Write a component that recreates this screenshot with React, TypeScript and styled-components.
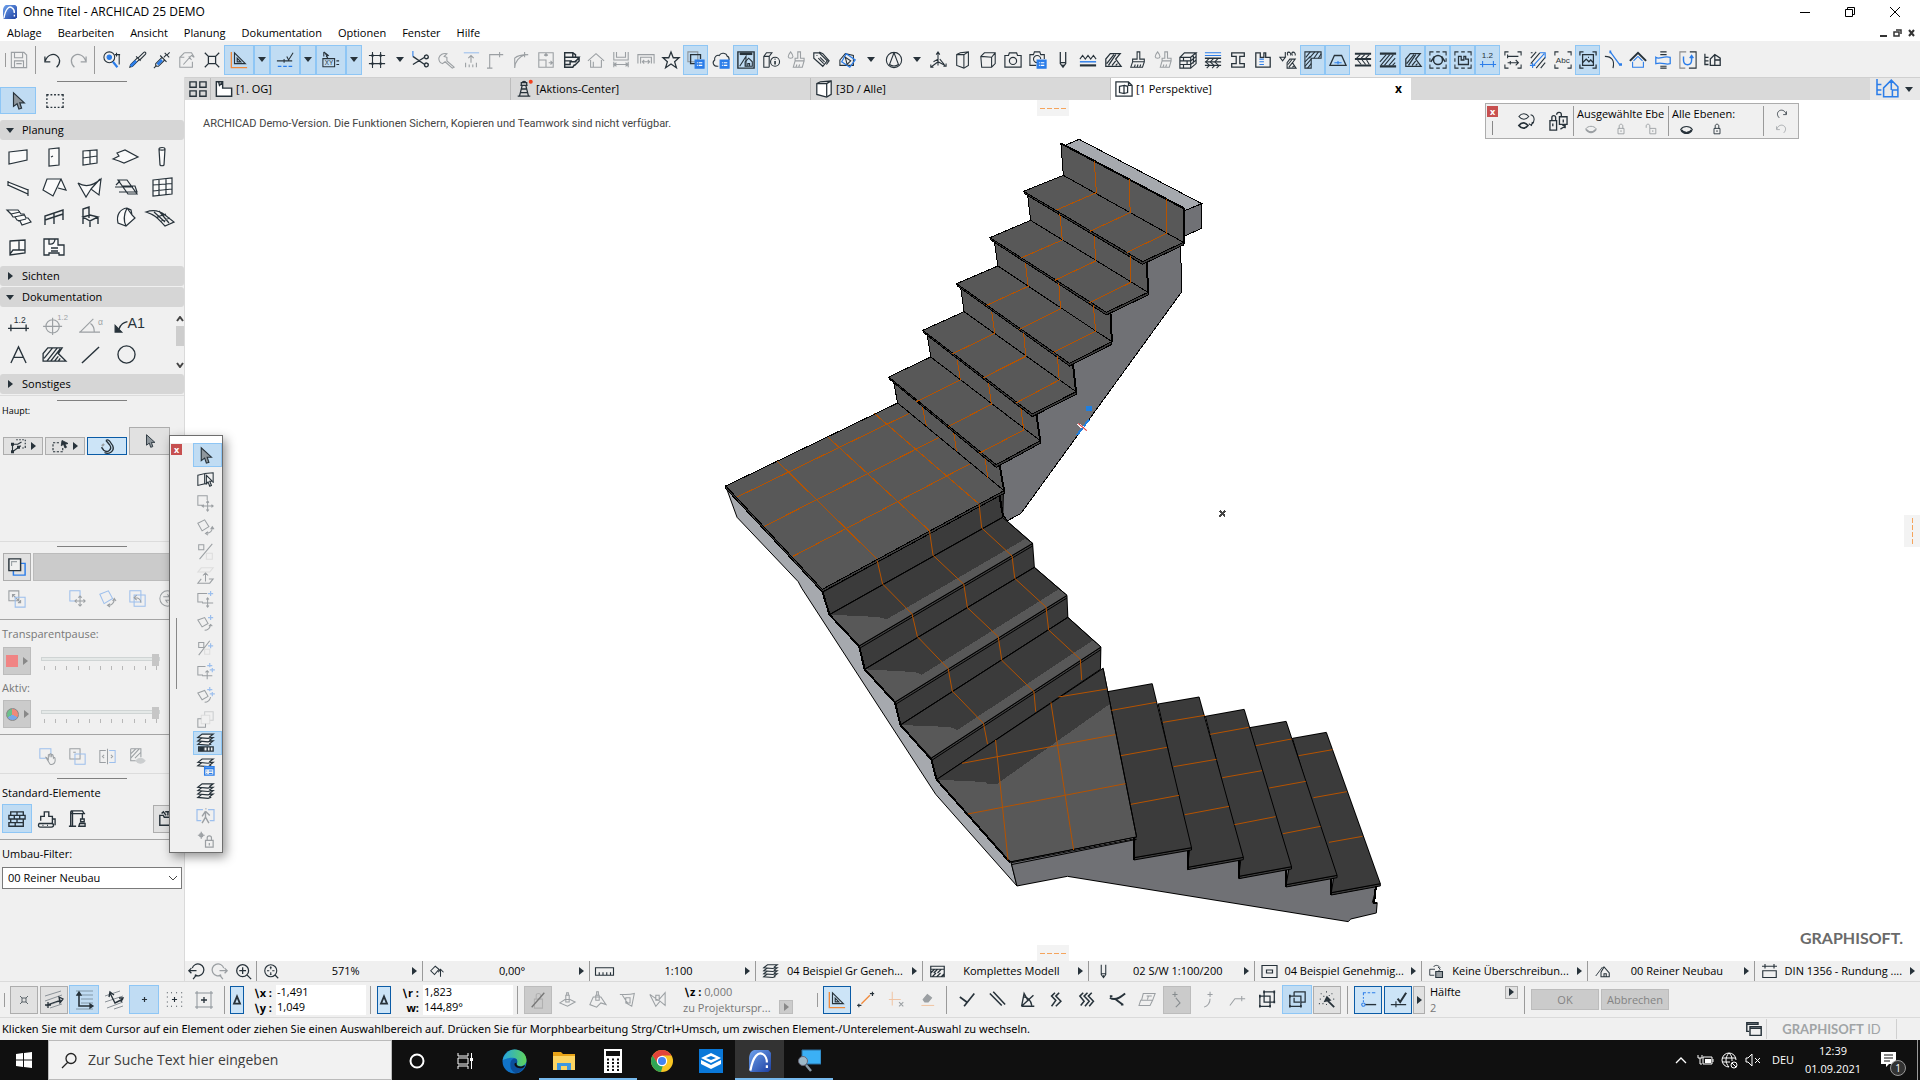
import React from "react";
import styled, { createGlobalStyle, css } from "styled-components";

const INK = "#27323a";
const BLUE = "#2b7de9";
const ORANGE = "#f08a3c";
const ACTIVE = "#c0dcf3";
const ACTIVE_EDGE = "#8ec6f5";
const PANEL = "#f0f0f0";
const UI_FONT = `"Open Sans", "Noto Sans", sans-serif`;

const Global = createGlobalStyle`
  *, *::before, *::after { box-sizing: border-box; }
  body { margin: 0; background: #fff; }
  button, input, select { font: inherit; color: inherit; margin: 0; padding: 0; border-radius: 0; }
  button { background: none; border: 0; display: inline-flex; align-items: center; justify-content: center; }
`;

/* ---------- icons: [path, stroke, fill, strokeWidth] on a 20 x 20 grid ---------- */

type Stroke = [string, string?, string?, number?];
type Glyph = { t: string; x: number; y: number; s: number; c?: string };
type Part = Stroke | Glyph;

const N = "none";
const G = "#9aa0a4";

const layer = (y: number): Stroke => [`M1 ${y + 4}L6 ${y}h13l-4 3 1 1-3 1z`, INK, PANEL, 1.4];

const icons: Record<string, Part[]> = {
  save: [["M1.5 1.5h14l3 3v14h-17zM5 1.500v6h9v-6M5 18v-7h10v7M7 14h6"]],
  undo: [["M1 6v6h6M1.500 11C4 4 10 2.500 14 5s5 8 0 13", INK, N, 1.4]],
  redo: [["M19 6v6h-6M18.500 11C16 4 10 2.500 6 5s-5 8 0 13", INK, N, 1.4]],
  find: [["M1 7a6 6 0 1 1 12 0a6 6 0 1 1-12 0", INK], ["M4.500 7a2.500 2.500 0 1 1 5 0a2.500 2.500 0 1 1-5 0", BLUE, BLUE], ["M11 12l5 6", BLUE, N, 2.4], ["M13 4h6M18 4v11M15 2v4"]],
  dropper: [["M9 6l5 5M11 8l6-6c2-2 4 0 2 2l-6 6"], ["M11 7l-8 8-1 3 3-1 8-8", INK], ["M3 17l6-6", BLUE, N, 3]],
  syringe: [["M8 5l7 7M12 7l3-3M13 2l5 5M15.500 4.500l3-3"], ["M10 7l-7 7v3h3l7-7M4 16l-3 3"], ["M5 15l5-5", BLUE, N, 3]],
  transferAll: [["M7 7H2v11h14v-6M2 7l5-5M7 2h8l3 5-3-2-9 10M12 6l3 4"]],
  stretch: [["M6 6h8v8H6zM2 2l4 4M18 2l-4 4M2 18l4-4M18 18l-4-4", INK, N, 1.4]],
  guide: [["M5 2v12h12zM8 8v4h4z", INK, N, 1.3], ["M1.500 1v17.500H19", ORANGE, N, 1.5]],
  snapPoint: [["M1 11h17M12 6l2 4 5-8M9 9v4"], ["M2 17h4M8 17h4M14 17h4", BLUE, N, 1.5]],
  tracker: [["M1 8.500h13v9H1zM16 11h3M16 15h3"], ["M2 1l5 4-2 1 1.500 2M2 1v5", INK, INK], { t: "XY", x: 3, y: 15.5, s: 7 }],
  grid: [["M5 1v18M14 1v18M1 5h18M1 14h18"], ["M4 5h2M13 5h2M4 14h2M13 14h2M5 4v2M14 4v2M5 13v2M14 13v2", INK, N, 2.500]],
  scissors: [["M1 6l13 9M1 15L14 7M14 15a2 2 0 1 1 4 1a2 2 0 1 1-4-1M14 7a2 2 0 1 0 4-1a2 2 0 1 0-4 1", INK, N, 1.5], ["M1 0v6", BLUE]],
  axe: [["M2 8c1-4 5-6 9-5L8 6l3 1v4l8 7-2 1-8-7-3 2C3 13 2 11 2 8z"]],
  adjust: [["M2 2h17", BLUE], ["M10 5v8M7 8l3-3 3 3M4 13v5M8 15v3M12 15v3M16 13v5"]],
  corner: [["M3 19V4h15M14 1v6M0 19h6"]],
  arcCorner: [["M3 19V8C6 5 10 4 18 4M3 19C3 12 8 6 15 4M14 1v6"]],
  resizeBox: [["M2 2h16v16H2zM2 10h8v8M10 6V3M8 5l2-2 2 2M13 13h4M15 11l2 2-2 2"]],
  beamCut: [["M3 2h9v5h7l-4 5H9v3H3zM3 15v3h9l2-3M12 2l3 2v3M3 7h9M3 11h8M14 12l5-4v3l-5 5", INK, N, 1.6]],
  roofHome: [["M1 11l9-8 9 8M4 10v8h12v-8M7 18v-6"]],
  dimBox: [["M2 1v9h16V1M5 1v6h10V1M2 15h16M2 12v6M18 12v6M5 13l-3 2 3 2M15 13l3 2-3 2"]],
  dimFlat: [["M1 14V4h18v10M4 14V7h12v7M7 12h6M8 10l-2 2 2 2M12 10l2 2-2 2"]],
  star: [["M10 1l2.500 6.500h6.500l-5 4.500 2 6.500-6-4-6 4 2-6.500-5-4.500h6.500z", INK, N, 1.4]],
  ghostOn: [["M1 1h11v11H1z", "#8b9298"], ["M9 14H4V4h11v5", INK, N, 1.5], ["M9 10h10v9H9z", BLUE, BLUE], ["M11 13h1M13 13h4M11 16h1M13 16h4", "#fff"]],
  cloudSet: [["M7 17H6c-5 0-6-5-3-7-1-4 3-6 5-5 2-4 8-3 9 1 2 0 2 3 2 4"], ["M9 10h10v9H9z", BLUE, BLUE], ["M11 13h1M13 13h4M11 16h1M13 16h4", "#fff"]],
  houseBlue: [["M1 1h18v18H1z", INK, N, 1.6], ["M3 3h14", INK, N, 3], ["M3 17L10 6v11"], ["M9 12l4-4 4 4v5H9zM12 17v-3h2v3"]],
  bookInfo: [["M8 18H2V6l3-4h6L8 6v12M2 6h6M19.500 12a5 5 0 1 1-10 0a5 5 0 1 1 10 0"], ["M14.500 11v4M14.500 8.500v1", INK, N, 1.8]],
  brush: [["M9 1h3v8h5v3H4V9h5zM4 12l-2 6h13l2-6M6 18l1-3M9 18l1-3M12 18l1-3"]],
  dropBrush: [["M12 1h3v7h4v3H9V8h3zM9 11l-2 7h10l2-7M10 18l1-3M13 18l1-3M4 1c4 5 3 7 0 7s-4-2 0-7z"]],
  tags: [["M2 2h6l9 9-5 6-10-9zM8 1l4 2 7 8-3 4M5 5h1", INK, N, 1.3], ["M7 8l6 6M9 7l5 5"]],
  cubeEdit: [["M1 10l6-7 9 2v11H1z"], ["M8 3l10 7-6 8-9-6z", BLUE, N, 1.4], ["M7 7l6 4-4 4z"]],
  compass: [["M1.500 10a8.500 8.500 0 1 1 17 0a8.500 8.500 0 1 1-17 0M10 2L5 15c3 2 7 2 10 0z"]],
  origin: [["M10 12V2M8 4l2-3 2 3M10 12l-8 6M2 15v3h3M10 12l8 4M16 17h3v-3M5 12l5-3v7M12 9l5 6"]],
  box3d: [["M3 4l4-2 9-1v15l-5 3-8-3zM11 4v14M3 4l8 0 5-3"]],
  cube: [["M2 6l4-4h12v12l-4 4H3zM2 6l12 1 4-5M14 7v11"]],
  camera: [["M1 5h4l1-3h8l1 3h4v13H1zM6 11a4 4 0 1 1 8 0a4 4 0 1 1-8 0", INK, N, 1.3]],
  cameraSet: [["M8 16H1V4h4l1-3h6l1 3h4v5M5 9a4 4 0 1 1 8 0M5 9a4 4 0 0 0 4 4"], ["M9 10h10v9H9z", BLUE, BLUE], ["M11 13h1M13 13h4M11 16h1M13 16h4", "#fff"]],
  pen: [["M7 1v13l3 4 3-4V1M7 13h6M10 15v3", INK, N, 1.4]],
  lineTypes: [["M1 9l3-4 3 4 3-4 3 4 3-4 3 4"], ["M1 12h18", BLUE, N, 1.6], ["M1 16h18", INK, N, 2.4]],
  hatch: [["M2 17V9l5-6h11l-5 6 6 8zM3 14l8-10M5 16l8-12M9 16l4-5M13 16l2-2", INK, N, 1.4]],
  brick: [["M1 7h12v12H1zM1 7l5-5h13l-6 5M19 2v12l-6 5M1 11h12l6-5M1 15h12l6-5M5 7v4M9 11v4M5 15v4M16 4v4M16 9v5", INK, N, 1.3]],
  composite: [["M1 2h18M1 5h18", BLUE], ["M1 8h18M1 12h18M1 16h18", INK, N, 1.5], ["M2 12l4-4M7 12l4-4M12 12l4-4M2 12l4 4M7 12l4 4M12 12l4 4M3 19l3-3M9 19l3-3M14 19l3-3"]],
  profile: [["M3 2h14v4h-5v8h5v4H3v-4h5V6H3z", INK, N, 1.4]],
  zone: [["M2 2h5v5h4V2h2v5h5v11H2z", INK, N, 1.4], ["M6 9h5M6 12h5M6 15h5", BLUE]],
  surfaces: [["M1 7h6L4 11zM7 7V1M10 5c-3-5 4-5 3 0M15 5c-3-5 4-5 3 0M9 19v-6l3-4h6l-3 4 4 6zM10 15l4-5M11 18l4-5M15 18l2-2"]],
  wallHatch: [["M1 1h18v7H8v11H1z", INK], ["M2 7l5-6M6 8l6-7M11 8l5-7M16 8l3-5M1 12l6-6M1 17l7-8M4 19l4-5", INK]],
  trapezoid: [["M6 5h8l5 11H1z", INK, N, 1.4], ["M6 13h8M10 11v4", BLUE]],
  layersTwo: [["M1 3h18M1 9h18M1 16h18", INK, N, 2.2], ["M3 8l4-4M8 8l4-4M13 8l4-4M4 10l4 5M9 10l4 5M14 10l3 5"]],
  bandHatch: [["M1 3h18M1 17h18", INK, N, 2.6], ["M2 16L12 4M6 16L16 4M11 16l7-8M1 12l7-8M15 16l3-3"]],
  circleBox: [["M1 5V1h4M8 1h4M15 1h4v4M19 8v4M19 15v4h-4M12 19H8M5 19H1v-4M1 12V8"], ["M5 10a5 5 0 1 1 10 0a5 5 0 1 1-10 0M2 12l4-6M18 12l-4-6", INK, N, 1.6]],
  zoneBox: [["M1 5V1h4M8 1h4M15 1h4v4M19 8v4M19 15v4h-4M12 19H8M5 19H1v-4M1 12V8"], ["M5 15V6h3v4h3V6h2v3h3v6z", INK, N, 1.4]],
  dimBlue: [["M1 15h18M4 11v7M16 11v7", BLUE], { t: "1.2", x: 3, y: 8, s: 9 }],
  dimFrame: [["M1 5V1h4M15 1h4v4M19 15v4h-4M5 19H1v-4M4 6h12M4 4v4M4 13h12M13 10l3 3-3 3M7 11v4"]],
  hatchFrame: [["M2 8l6-7M2 14L12 2M8 19l10-12M13 19l5-6M4 2h-2", INK], ["M4 17L17 3M12 2h6v6M1 16h6M4 13v6", BLUE]],
  abcFrame: [["M1 5V1h4M15 1h4v4M19 15v4h-4M5 19H1v-4"], { t: "Abc", x: 2, y: 13.5, s: 9 }],
  imgFrame: [["M1 5V1h4M15 1h4v4M19 15v4h-4M5 19H1v-4M4 4h12v12H4zM4 13l4-4 3 3 2-2 3 3M10 7h1", INK, N, 1.4]],
  tangent: [["M1 6c8 0 11 5 9 13"], ["M7 1l11 15", BLUE, N, 1.4], ["M6 1h2M17 15h3", BLUE, N, 3]],
  roofBlue: [["M1 11l9-9 9 9", INK, N, 2.2], ["M4 12v6h12v-6M10 6l-5 5M10 6l5 5", BLUE]],
  section: [["M2 7c4 3 8-2 16 0v7c-5 2-8-2-16 0z", BLUE, N, 1.4], ["M7 1h7M7 4h7M7 17h7M7 19h7"]],
  magnetBlocks: [["M8 1H1v18h6", "#888"], ["M12 1h7v18h-8"], ["M5 6v4c0 7 9 7 9 0V6M12 8l2-3 2 3", BLUE, N, 1.6]],
  treeHouse: [["M1 3v12h4M1 7h4M1 11h4M7 16V9l5-5 6 4v8zM12 4v12M12 10h6", INK, N, 1.4]],
  treeHouseBlue: [["M0 1v14h4M0 6h4M0 11h4M6 17V9l7-7 6 6v9zM14 17v-6h5M13 2v9", BLUE, N, 1.4]],
  four: [["M1 2h7v6H1zM12 2h7v6h-7zM1 12h7v6H1zM12 12h7v6h-7z", INK, N, 1.5]],
  plan: [["M1.500 2h7v7h10v9H1.500zM4 2l1 4 3-3", INK, "#fff", 1.6]],
  tower: [["M6 6h8M7 6V3h6v3M8 3c0-2 4-2 4 0M8 6L5 18M12 6l3 12M3 18h14M7 10h6M6 14h8", INK, N, 1.4], ["M16 2a1.500 1.500 0 1 0 3 0a1.500 1.500 0 1 0-3 0", "#f1401e", "#f1401e", 1.5]],
  box3dWhite: [["M2 4l4-2 12-1v15l-5 3-11-3zM13 4v14M2 4h11l5-3", INK, "#fff", 1.4]],
  perspective: [["M1 2h14l4 4v12H1zM15 2v4h4M5 7l5-1v9l-5-1zM10 6l4 1v7l-4 1", INK, N, 1.4]],
  cursor: [["M5 1v15l4-3 2 6 3-1-2-6h5z", INK, "#8f979d", 1.3]],
  marquee: [["M1 5V3h2M5 3h2M9 3h2M13 3h2M17 3h2v2M19 7v2M19 11v2M19 15v2h-2M15 17h-2M11 17H9M7 17H5M3 17H1v-2M1 13v-2M1 9V7", INK, N, 1.5]],
  wall: [["M1 5l18-2v10L1 17z", INK, "#fafafa", 1.2]],
  door: [["M5 2l10-1v17L5 19zM7 10l2-1", INK, "#fafafa", 1.2]],
  window: [["M3 4l14-1v13L3 18zM10 3.500v13.500M3 11l14-2", INK, "#fafafa", 1.2]],
  slab: [["M-3 12l6-3-2-3 8-3 13 7-14 6-5-2z", INK, "#fafafa", 1.2]],
  column: [["M7 2c0-2 6-2 6 0l-1 16c-1 1-3 1-4 0zM7 2c0 1.500 6 1.500 6 0", INK, "#fafafa", 1.2]],
  beam: [["M0 5l20 8v4L0 8zM0 4v5M20 12v7", INK, "#fafafa", 1.2]],
  roof: [["M3 2h14l-8 17-10-6zM17 2l5 11-8-2", INK, "#fafafa", 1.2]],
  shell: [["M-2 6c8 5 16 2 23-4l-2 16-8-6-5 8zM11 12l9-10", INK, "#fafafa", 1.2]],
  skylight: [["M2 3h9l10 14h-9zM-1 10h18M3 15h18l-2-6H6M0 8l4-4", INK, N, 1.2]],
  curtain: [["M1 3l19-2v16L1 19zM7 2.500v16M14 2v15.500M1 8l19-1.500M1 14l19-2", INK, "#fafafa", 1.2]],
  stair: [["M-1 3h11l3 4h3l2 4h2l3 4-9 3-2-4-3-1-2-3H5L3 7zM3 7l9-2M6 10l10-2M10 14l8-2", INK, "#fafafa", 1.2]],
  railing: [["M1 18V9l18-6v10M1 13l18-6M10 6v11", INK, N, 1.4]],
  chair: [["M3 10V2l6-2v11M3 10l7-2 8 2-8 4zM3 10v7M10 14v6M18 10v7", INK, N, 1.4]],
  morph: [["M2 16c-2-8 2-14 9-15l4 2 1 5 3 3-9 8zM11 1c-3 6-4 12-1 18M11 1l5 7", INK, "#fafafa", 1.2]],
  mesh: [["M-6 5c8-3 14-1 19 3l9 7-9 4C7 13 4 8-6 5zM2 5l11 10M7 4l10 12M5 10l9-3M9 14l9-3", INK, N, 1.2]],
  corner2: [["M2 4l15-1v13L2 18zM11 3.500v10M2 17l3-4 12 0", INK, "#fafafa", 1.3]],
  zoneTool: [["M0 2h5v5c4 1 6-2 6-5h3v6h6v10h-5v-2H5v2H0zM7 11h7M7 14h7M5 2h6", INK, "#fafafa", 1.3]],
  dim: [["M-1 14h22M2 10v7M18 10v7", INK, N, 1.4], { t: "1.2", x: 5, y: 8, s: 9 }],
  levelDim: [["M1 12a7 7 0 1 1 14 0a7 7 0 1 1-14 0M-2 12h20M8 3v18"], { t: "1.2", x: 13, y: 5, s: 8 }],
  angleDim: [["M-2 18h22M-1 18L13 4M10 9c3 2 4 6 4 9"], { t: "α", x: 18, y: 10, s: 9 }],
  label: [["M2 15c2-6 5-7 9-8", INK, N, 1.4], ["M-2 11v7h7z", INK, INK], { t: "A1", x: 11, y: 14, s: 15 }],
  text: [["M2 19L10 2l8 17M5 13h10", INK, N, 1.4]],
  fill: [["M-2 17V9l5-6h15l-4 6 8 8zM-1 14L8 3M2 17L13 3M6 17L16 4M10 17l4-5M14 17l2-3", INK, N, 1.4]],
  line: [["M1 19L19 2", INK, N, 1.5]],
  circle: [["M1 10a9 9 0 1 1 18 0a9 9 0 1 1-18 0", INK, N, 1.4]],
  quickSelect: [["M7 1h2M11 1h2M15 1h2M19 1v2M19 5v2M19 9v3M15 12h2M1 7h8l5-3M2 17l11-8M2 7v10", INK, N, 1.5], ["M0 17h4M8 11h4M0 7h4", INK, N, 4]],
  marqueeCur: [["M0 5h3M5 5h3M0 17h3M5 17h3M10 17h3M0 7v3M0 12v3M13 12v3", INK, N, 1.5], ["M12 2l8 4-4 1 2 4-2 1-2-5-3 2z", INK, INK]],
  magnet: [["M8 2l5 6c4 6-3 11-8 7L2 11M13 3l4 6c3 8-6 12-11 9M8 2c2-2 4 0 5 1", INK, N, 1.8], ["M3 7l2 2", G, N, 4]],
  ghostWin: [["M6 6h13v13H6z", BLUE, N, 1.6], ["M1 1h13v13H1z", INK, PANEL, 1.6], ["M4 9V4h6", G]],
  compare: [["M1 1h11v11H1zM5 5l9 9M5 8V5h3M14 11v3h-3"], ["M8 8h11v11H8z", BLUE]],
  moveG: [["M8 13H1V1h12v8", BLUE], ["M7 13h12M13 7v12M11 9l2-2 2 2M11 17l2 2 2-2M9 11l-2 2 2 2M17 11l2 2-2 2"]],
  rotG: [["M1 5l10-4 5 9-10 6z", BLUE], ["M11 18c4 0 7-3 7-7M16 13l2-3 2 3M13 16l-3 2 3 2"]],
  backG: [["M1 1h13v13H1zM6 6h13v13H6z", BLUE], ["M7 9c4 0 7 1 7 6M9 6L6 9l3 3"]],
  swapG: [["M1 10a9 9 0 1 1 18 0a9 9 0 1 1-18 0M5 8h7l-2-3M15 12H8l2 3"]],
  handG: [["M8 12H1V1h13v6", BLUE], ["M8 11c2 0 2 3 3 3V8c1-1 2 0 2 3V7c1-1 2 0 2 4V8c1-1 2 0 2 4 2-2 2 0 2 3s-3 5-6 4z"]],
  overlapG: [["M1 1h12v12H1zM5 5h3"], ["M7 7h12v12H7z", BLUE]],
  splitG: [["M8 3H1v14h7M10 1v18M6 8l-2 2 2 2M14 8l2 2-2 2"], ["M12 3h7v14h-7", BLUE]],
  hatchEye: [["M2 1h12v10M2 1v14h6M2 12L12 1M2 7l6-6M7 12l7-7"], ["M8 15c3-4 8-4 11 0-3 4-8 4-11 0z", G, G]],
  bricks: [["M3 2h14v4H3zM1 6h12v4H1zM3 10h14v4H3zM1 14h16v4H1zM10 2v4M7 6v4M13 6h6v4h-6M10 10v4M8 14v4", INK, N, 1.5]],
  dozer: [["M1 15h14c3 0 3 4 0 4H2c-2 0-2-4 0-4zM3 12V7h4V2h5v5h4v8M16 10h3v7M5 17h1M10 17h1", INK, N, 1.5]],
  crane: [["M3 18V2h2v16M1 18h8M3 4h16M3 1h13l2 3M16 4v6M14 10h4v3h-4zM12 18h7v-3h-6z", INK, N, 1.5]],
  stack: [["M2 17V6h4l1 2h11v9zM4 4l2-2 3 4M8 2h6v4M11 1v5", INK, N, 1.6]],
  wallCur: [["M1 5l8-2v12l-8 2zM9 3l10-1v12M9 15l3 0"], ["M11 5v10l2-2 2 5 2-1-2-5h3z", INK, PANEL, 1.3]],
  moveP: [["M7 12H1V1h11v5M6 13h13M12.500 7v12M11 9l1.500-2L14 9M11 17l1.500 2 1.500-2M8 11.500L6 13l2 1.500M17 11.500l2 1.500-2 1.500"]],
  rotP: [["M1 5l8-4 5 8-8 5zM10 17c5 0 8-2 8-7M16 12l2-3 2 3M13 15l-3 2 3 2"]],
  mirrorP: [["M2 2h6v6H2zM18 1L3 19"], ["M11 12h7v7h-7z", "#c4c4c4"]],
  elevP: [["M5 1h14l-4 5H1z", "#c4c4c4"], ["M5 14L1 19h14l4-5h-5M10 17V7M7 10l3-3 3 3"]],
  moveC: [["M7 13H1V3h11M6 14h13M12.500 8v11M11 10l1.500-2L14 10M11 17l1.500 2 1.500-2"], ["M16 0v6M13 3h6", BLUE, N, 1.4]],
  rotC: [["M1 6l8-3 4 7-7 4zM9 18c4 0 6-2 7-6M14 13l2-2 2 2"], ["M16 0v6M13 3h6", BLUE, N, 1.4]],
  mirrorC: [["M2 4h6v6H2zM15 2L2 19"], ["M9 12h6v6H9z", "#c4c4c4"], ["M16 5v6M13 8h6", BLUE, N, 1.4]],
  moveCC: [["M7 14H1V4h9M6 15h12M12 9v10M10 11l2-2 2 2"], ["M15 0v5M12 3h6M18 6v5M15 8h6", BLUE, N, 1.4]],
  rotCC: [["M1 7l8-3 4 7-7 4zM9 18c4 0 6-2 7-6"], ["M15 0v5M12 3h6M18 6v5M15 8h6", BLUE, N, 1.4]],
  copies: [["M9 1h10v10H9z", G, PANEL], ["M5 5h10v10H5z", "#c4c4c4", PANEL], ["M5 9H1v10h9v-4"]],
  layersSet: [layer(7), layer(3), layer(-1), ["M2 14h17v5H2zM8 14v5M12 14v5M15.500 14v5", INK, PANEL, 1.6], ["M5 14v5", INK, N, 5]],
  layersDlg: [layer(4), layer(0), ["M9 9h11v10H9z", BLUE, PANEL, 1.6], ["M9 11h11", BLUE, N, 2.4], ["M11 14h1M14 14h4M11 17h1M14 17h4", BLUE]],
  layers: [layer(13), layer(9), layer(5), layer(1)],
  walk: [["M7 3H0v13h5M13 3h7v13h-5", BLUE, N, 1.4], ["M10 2h1M10 5l-4 6M10 5l5 5M10 5v7l-4 7M10 12l4 7", INK, N, 1.6]],
  lockSnap: [["M5 1v8M1 5h8M3 5a2 2 0 1 1 4 0a2 2 0 1 1-4 0M10 11h9v8h-9zM12 11V8c0-3 5-3 5 0v3M14.500 14v3", INK, N, 1.4]],
  zoomPrev: [["M6 19l4-5M5 6a7 7 0 1 1 3 8M1 9h9M4 6L1 9l3 3", INK, N, 1.5]],
  zoomNext: [["M14 19l-4-5M15 6a7 7 0 1 0-3 8M19 9h-9M16 6l3 3-3 3", INK, N, 1.5]],
  zoomIn: [["M2 9a7 7 0 1 1 14 0a7 7 0 1 1-14 0M14 14l5 5M9 5v8M5 9h8", INK, N, 1.5]],
  zoomFit: [["M1 9a8 8 0 1 1 16 0a8 8 0 1 1-16 0M15 15l4 4M9 4v3M9 11v3M4 9h3M11 9h3M8 5l1-1 1 1M8 13l1 1 1-1", INK, N, 1.5]],
  orient: [["M1 9l6-6 5 4-6 7zM14 17V8M11 11l3-4 4 4", INK, N, 1.4]],
  ruler: [["M-2 5h24v10H-2zM3 11v4M8 11v4M13 11v4M18 11v4", INK, N, 1.5]],
  hatchBox: [["M1 3h18v14H1zM1 7h18M1 12l5-5M5 12l5-5M10 12l5-5M3 17l5-5M9 17l5-5M15 17l4-4", INK, N, 1.6]],
  frameBox: [["M0 2h20v16H0zM6 8h8v4H6z", INK, N, 1.6]],
  override: [["M8 7H1v8h6M12 4l3 3-3 3M6 4c2-3 6-3 9 1"], ["M9 10h9v8H9z", INK, "#9aa0a4", 1.4]],
  houseOut: [["M1 16L10 4"], ["M8 17v-6l4-7 7 8v5zM12 17v-4h3v4", INK, N, 1.4]],
  dimStd: [["M0 3h20M4 0v6M16 0v6M1 9h18v9H1z", INK, N, 1.5]],
  gridSkew: [["M1 6l16-5M1 11l17-6M2 16l17-6M6 18l12-4", "#8b9298", N, 1], ["M3 15l14-5M15 7l4 2-3 4zM1 15h6M4 12v6", INK, N, 1.3]],
  gridAxes: [["M2 1h17M2 5h17M7 9h12M7 13h12M2 19h17", "#8298a8", N, 1], ["M5 3v13h13", INK, N, 1.6], ["M3 5l2-3 2 3zM16 14l3 2-3 2z", INK, INK, 1.3]],
  gridRot: [["M1 6l15-5M1 12l18-6M3 18l16-6M10 19l9-3", "#8b9298", N, 1], ["M6 3l5 10 8-4M5 7l1-5 4 3M15 8h4l-2 4", INK, N, 1.4]],
  cross: [["M10 7v6M7 10h6", INK, N, 1.4]],
  dotsCross: [["M10 7v6M7 10h6", INK, N, 1.3], ["M1 2h1M6 2h1M12 2h1M18 2h1M1 7h1M18 7h1M1 13h1M18 13h1M1 18h1M6 18h1M12 18h1M18 18h1", INK]],
  dotsFrame: [["M10 7v6M7 10h6", INK, N, 1.3], ["M3 1v18M17 1v18M1 3h18M1 17h18", "#8b9298", N, 1]],
  delta: [["M10 4l5 12H5z", INK, N, 3]],
  lockOff: [["M6 9h9v10H6zM8 9V5c0-3 5-3 5 0v4", "#b0b0b0"], ["M17 2L3 18", "#777", N, 1.5]],
  planeA: [["M1 14l6-4h6l6 3-9 5zM8 5h4v8H8zM9 5V2h2v3"]],
  planeB: [["M1 16l4-9h9l6 9-6-2-5 5zM8 5h4v6H8zM9 5V1h2v4"]],
  planeC: [["M1 4c6 0 10 1 17-1l-3 15-7-4M4 5l6 9M8 8h5v6H8z"]],
  planeD: [["M1 4l7 14 5-6 6 5V2l-8 9zM8 5h4v6H8z"]],
  guideSeg: [["M1 15v4M-1 17h5M17 1v5M14 3h5", INK, N, 1.4], ["M4 15L14 5", ORANGE, N, 1.6]],
  guideX: [["M5 1v16M1 10h14", ORANGE], ["M13 13l5 5M18 13l-5 5"]],
  eraser: [["M6 10l5-6 5 4-4 5H8z", INK, INK], ["M4 17h15", ORANGE]],
  perp: [["M1 7l8 6M18 3L6 18", INK, N, 2]],
  parallel: [["M1 3l14 14M5 1l14 15", INK, N, 1.8]],
  bisect: [["M3 18L6 3l5 9M3 18h15M3 18L17 5M6 7c4 0 8 4 9 10", INK, N, 1.6]],
  offset1: [["M7 2l-4 4 5 5-5 7M12 2L8 6l6 6-6 6", INK, N, 1.8]],
  offset2: [["M5 2L1 6l5 6-4 5M10 2L6 6l6 6-5 6M15 2l-4 4 6 6-5 6", INK, N, 1.8]],
  special: [["M1 8c6 4 12 0 18-5M8 10l8 6M1 6h3M14 16h3", INK, N, 2.2]],
  planeT: [["M2 11h14l-3 6H0zM5 3h14l-3 8H3zM9 6h6M11 6l-1 4"]],
  seg1: [["M7 1v6M4 4h6M8 8l5 6-5 5"]],
  arc1: [["M13 1v6M10 4h6M13 9c0 5-2 8-7 10"]],
  arc2: [["M1 17l6-8h5M15 6v6M12 9h7"]],
  groupA: [["M6 1h12v12H6zM1 6h12v12H1z", INK, N, 1.5], ["M5 1h2M17 1h2M17 13h2M0 6h2M0 18h2M12 18h2", INK, N, 3]],
  groupB: [["M6 1h13v12h-5M1 6h13v12H1zM6 6V1M6 8v5h7", INK, N, 1.5], ["M0 6h2M0 18h2M13 18h2", INK, N, 3]],
  wand: [["M9 9l9 9M8 11l2-4 3 3z", INK, N, 2], ["M3 3h1M9 1h1M15 3h1M2 9h1M5 14h1M17 9h1M6 6h1M12 5h1M1 14h1M9 15h1", INK]],
  snapGuide: [["M4 13v-2M4 9V7M4 5V2h3M9 2h3M14 2h4", BLUE], ["M6 16h13", INK, N, 1.6], ["M2 16a2 2 0 1 1 4 0a2 2 0 1 1-4 0", BLUE]],
  snapCheck: [["M1 16h18M7 12v7", INK, N, 1.3], ["M9 9l3 4 7-11", INK, N, 2.4]],
  windows: [["M4 13H1V2h14v3M1 4h14", INK, N, 1.8], ["M5 7h14v11H5zM5 9h14", INK, N, 1.8]],
  eyeSwap: [["M1 5c3-4 8-4 11 0-3 4-8 4-11 0zM14 3c5 1 5 8 1 11M12 13l3 2 1-4"], ["M1 15c3-4 7-4 10 0-3 4-7 4-10 0z", INK, N, 2]],
  lockSwap: [["M1 9h7v10H1zM3 9V6c0-3 4-3 4 0v3M11 5h8v8h-8zM13 5V3c0-4-5-3-5 0M12 18l5-3M14 14h3v3M4 12v3M15 8v3", INK, N, 1.4]],
  eye: [["M1 10c4-6 14-6 18 0-4 6-14 6-18 0z", INK, N, 1.6], ["M2 11c4 6 12 6 16 0", INK, N, 3]],
  lock: [["M5 9h10v9H5zM7 9V5c0-4 6-4 6 0v4M10 12v3", INK, N, 1.5]],
  unlock: [["M8 9h10v9H8zM8 9V5c0-4-6-4-6 0v3M13 12v3", INK, N, 1.5]],
};

const Svg = styled.svg<{ $size: number; $dim?: boolean }>`
  width: ${p => p.$size}px;
  height: ${p => p.$size}px;
  flex: none;
  overflow: visible;
  opacity: ${p => (p.$dim ? 0.42 : 1)};
`;

function Icon({ name, size = 18, dim }: { name: string; size?: number; dim?: boolean }) {
  return (
    <Svg $size={size} $dim={dim} viewBox="0 0 20 20" aria-hidden="true">
      {(icons[name] || []).map((p, i) =>
        Array.isArray(p) ? (
          <path key={i} d={p[0]} stroke={p[1] || INK} fill={p[2] || "none"} strokeWidth={p[3] || 1.2} />
        ) : (
          <text key={i} x={p.x} y={p.y} fontSize={p.s} fill={p.c || INK} fontFamily="Liberation Sans, sans-serif">
            {p.t}
          </text>
        )
      )}
    </Svg>
  );
}

const Tri = styled.span<{ $dir: "down" | "right"; $dim?: boolean }>`
  flex: none;
  width: 0;
  height: 0;
  border: 4px solid transparent;
  ${p =>
    p.$dir === "down"
      ? css`border-top: 5px solid ${p.$dim ? "#888" : INK}; border-bottom: 0;`
      : css`border-left: 5px solid ${p.$dim ? "#888" : INK}; border-right: 0;`}
`;

/* ---------- shared shells ---------- */

const Shell = styled.div`
  height: 100vh;
  display: flex;
  flex-direction: column;
  overflow: hidden;
  background: #fff;
  color: #000;
  font: 11px/16px ${UI_FONT};
`;

const TitleBar = styled.header`
  flex: none;
  height: 24px;
  display: flex;
  align-items: center;
  padding: 0 3px;
`;
const Title = styled.h1`
  margin: 0 0 0 6px;
  flex: 1;
  font: 12px/16px ${UI_FONT};
`;
const WinButton = styled.button`
  width: 45px;
  height: 20px;
`;
const MenuBar = styled.nav`
  flex: none;
  height: 17px;
  display: flex;
  align-items: center;
  gap: 16px;
  padding: 0 4px 0 7px;
`;
const MenuItem = styled.button`
  font-size: 11px;
  line-height: 16px;
`;
const MdiButtons = styled.div`
  margin-left: auto;
  display: flex;
  gap: 5px;
`;
const TopBar = styled.div`
  flex: none;
  height: 36px;
  display: flex;
  align-items: center;
  background: ${PANEL};
  padding: 1px 0 0 5px;
`;
const ToolButton = styled.button<{ $on?: boolean; $w?: number }>`
  flex: none;
  width: ${p => p.$w || 25}px;
  height: 30px;
  border: 1px solid ${p => (p.$on ? ACTIVE_EDGE : "transparent")};
  background: ${p => (p.$on ? ACTIVE : "transparent")};
`;
const Divider = styled.span<{ $h?: number; $m?: number }>`
  flex: none;
  width: 1px;
  height: ${p => p.$h || 28}px;
  margin: 0 ${p => p.$m ?? 4}px;
  background: #9a9a9a;
`;

const Workspace = styled.div`
  flex: 1;
  min-height: 0;
  display: flex;
  position: relative;
`;

/* ---------- sidebar ---------- */

const Sidebar = styled.aside`
  flex: none;
  width: 185px;
  background: ${PANEL};
  border-right: 1px solid #dadada;
  overflow: hidden;
`;
const Block = styled.section<{ $h: number; $first?: boolean }>`
  height: ${p => p.$h}px;
  border-top: ${p => (p.$first ? 0 : "1px solid #dcdcdc")};
  display: flex;
  flex-direction: column;
`;
const Grip = styled.div`
  flex: none;
  width: 70px;
  height: 1px;
  margin: 4px auto;
  background: #808080;
`;
const PanelHead = styled.button`
  flex: none;
  width: 100%;
  height: 20px;
  justify-content: flex-start;
  gap: 8px;
  padding-left: 6px;
  margin-bottom: 1px;
  border-radius: 3px;
  background: #d6d6d6;
  font-size: 11px;
`;
const HeadMark = styled.span`
  width: 8px;
  display: flex;
  justify-content: center;
`;
const ToolGrid = styled.div<{ $bottom: number }>`
  display: grid;
  grid-template-columns: repeat(5, 36px);
  grid-auto-rows: 30px;
  padding: 1px 0 ${p => p.$bottom}px;
`;
const Cell = styled.button`
  width: 36px;
  height: 30px;
`;
const DocArea = styled.div`
  display: flex;
  position: relative;
`;
const ScrollRail = styled.div`
  position: absolute;
  right: 0;
  top: 8px;
  width: 8px;
  height: 52px;
  display: flex;
  flex-direction: column;
  align-items: center;
  justify-content: space-between;
`;
const ScrollThumb = styled.span`
  width: 8px;
  height: 20px;
  margin-bottom: 12px;
  background: #cdcdcd;
`;
const Row = styled.div<{ $h?: number; $gap?: number; $pad?: string; $align?: string }>`
  flex: none;
  display: flex;
  align-items: ${p => p.$align || "center"};
  height: ${p => (p.$h ? p.$h + "px" : "auto")};
  gap: ${p => p.$gap ?? 0}px;
  padding: ${p => p.$pad || "0 3px"};
`;
const Caption = styled.div<{ $h?: number; $dim?: boolean; $small?: boolean }>`
  flex: none;
  display: block;
  height: ${p => p.$h || 20}px;
  line-height: ${p => p.$h || 20}px;
  padding-left: 2px;
  font-size: ${p => (p.$small ? 9 : 11)}px;
  color: ${p => (p.$dim ? "#777" : "#000")};
`;
const BoxButton = styled.button<{ $w: number; $h: number; $tone?: "blue" | "grey" | "on" }>`
  flex: none;
  gap: 5px;
  width: ${p => p.$w}px;
  height: ${p => p.$h}px;
  border: 1px solid ${p => (p.$tone === "blue" ? "#0a5ba6" : p.$tone === "on" ? ACTIVE_EDGE : p.$tone === "grey" ? "#bcbcbc" : "#adadad")};
  background: ${p => (p.$tone === "blue" ? "#cce4f7" : p.$tone === "on" ? ACTIVE : p.$tone === "grey" ? "#cbcbcb" : "#e1e1e1")};
`;
const GreyField = styled.div`
  flex: 1;
  height: 28px;
  border: 1px solid #bcbcbc;
  background: #cbcbcb;
`;
const Rule = styled.hr`
  flex: none;
  width: 100%;
  height: 1px;
  margin: 0;
  border: 0;
  background: #a4a4a4;
`;
const SliderBox = styled.div`
  width: 119px;
  margin: 0 9px 0 10px;
`;
const Slider = styled.input`
  appearance: none;
  display: block;
  width: 119px;
  height: 14px;
  background: transparent;
  &::-webkit-slider-runnable-track { height: 4px; border: 1px solid #cfd4d4; background: #e4e8e7; }
  &::-webkit-slider-thumb { appearance: none; width: 7px; height: 12px; margin-top: -4px; background: #c6c6c6; }
`;
const Ticks = styled.div`
  display: flex;
  justify-content: space-between;
  padding: 0 3px;
  & > i { width: 1px; height: 4px; background: #b8b8b8; }
`;
const Swatch = styled.span`
  width: 12px;
  height: 12px;
  background: #f08484;
`;
const Wheel = styled.span`
  width: 13px;
  height: 13px;
  border: 1px solid #888;
  border-radius: 50%;
  background: conic-gradient(#ef8a7a 0 33%, #7aa8e8 33% 66%, #6cc08a 66% 100%);
`;
const SelectBox = styled.div`
  position: relative;
  margin: 0 2px;
`;
const FilterSelect = styled.select`
  appearance: none;
  display: block;
  width: 100%;
  height: 22px;
  padding-left: 5px;
  border: 1px solid #7a7a7a;
  background: #fff;
  font-size: 11px;
`;
const Chevron = styled.svg`
  position: absolute;
  right: 5px;
  top: 8px;
  width: 8px;
  height: 6px;
`;

/* ---------- tabs and viewport ---------- */

const Main = styled.main`
  flex: 1;
  min-width: 0;
  display: flex;
  flex-direction: column;
`;
const Tabs = styled.div`
  flex: none;
  height: 23px;
  display: flex;
  background: #d9d9d9;
  border-top: 1px solid #d0d0d0;
`;
const TabGrid = styled.button`
  width: 26px;
  border-right: 1px solid #bcbcbc;
`;
const Tab = styled.button<{ $on?: boolean }>`
  flex: 0 1 300px;
  justify-content: flex-start;
  gap: 3px;
  padding: 0 8px 0 4px;
  border-right: 1px solid ${p => (p.$on ? "#fff" : "#bcbcbc")};
  background: ${p => (p.$on ? "#fff" : "transparent")};
  & > b { margin-left: auto; font-size: 12px; }
`;
const TabEnd = styled.button`
  width: 50px;
  margin-left: auto;
  gap: 6px;
  background: #e8e8e8;
`;
const Viewport = styled.div`
  flex: 1;
  min-height: 0;
  position: relative;
  display: flex;
  justify-content: center;
  align-items: flex-start;
  background: #fff;
`;
const Model = styled.svg`
  flex: none;
  width: 705px;
  height: 860px;
`;
const Notice = styled.p`
  position: absolute;
  left: 18px;
  top: 16px;
  margin: 0;
  color: #444;
  font: 11px/16px Roboto, sans-serif;
`;
const EdgeHandle = styled.span<{ $side: "top" | "bottom" | "right" }>`
  position: absolute;
  display: flex;
  align-items: center;
  justify-content: center;
  background: #f3f3f3;
  ${p =>
    p.$side === "right"
      ? css`right: 0; top: 50%; margin-top: -16px; width: 16px; height: 32px;`
      : css`left: 50%; margin-left: -16px; width: 32px; height: 16px; ${p.$side}: 0;`}
`;
const Dashes = styled.span<{ $v?: boolean }>`
  width: ${p => (p.$v ? 1 : 26)}px;
  height: ${p => (p.$v ? 26 : 1)}px;
  background: repeating-linear-gradient(${p => (p.$v ? "180deg" : "90deg")}, #f5a45c 0 5px, transparent 5px 7px);
`;
const Brand = styled.span`
  position: absolute;
  right: 17px;
  bottom: 13px;
  font: 700 16px/20px Lato, sans-serif;
  color: #6a6a6a;
`;
const LayerBar = styled.div`
  position: absolute;
  right: 121px;
  top: 3px;
  width: 314px;
  height: 36px;
  display: flex;
  align-items: center;
  border: 1px solid #adadad;
  background: ${PANEL};
`;
const LayerClose = styled.div`
  width: 24px;
  height: 34px;
  padding: 2px 0 0 1px;
  display: flex;
  flex-direction: column;
  gap: 4px;
`;
const RedX = styled.button`
  width: 11px;
  height: 11px;
  background: #c75050;
  color: #fff;
  font: 700 9px/11px ${UI_FONT};
`;
const ShortLine = styled.span<{ $h: number; $ml: number }>`
  width: 1px;
  height: ${p => p.$h}px;
  margin-left: ${p => p.$ml}px;
  background: #888;
`;
const LayerGroup = styled.div<{ $w: number }>`
  flex: none;
  width: ${p => p.$w}px;
  height: 34px;
  padding: 2px 0 0 3px;
  white-space: nowrap;
  font-size: 11px;
  line-height: 16px;
`;
const LayerIcons = styled.div`
  display: flex;
  gap: 18px;
  padding-left: 8px;
`;
const LayerUndo = styled.div`
  flex: none;
  width: 34px;
  display: flex;
  flex-direction: column;
  align-items: center;
  gap: 1px;
`;
const MiniButton = styled.button`
  height: 14px;
`;

/* ---------- floating edit palette ---------- */

const Palette = styled.div`
  position: absolute;
  left: 169px;
  top: 358px;
  width: 54px;
  border: 1px solid #6e6e6e;
  background: ${PANEL};
  box-shadow: 3px 4px 10px rgba(0, 0, 0, 0.42);
`;
const PaletteTop = styled.div`
  height: 7px;
  background: #fff;
`;
const PaletteBody = styled.div`
  display: flex;
  justify-content: space-between;
`;
const PaletteSide = styled.div`
  padding: 1px 0 0 1px;
  display: flex;
  flex-direction: column;
  gap: 163px;
`;
const PaletteList = styled.div`
  width: 29px;
  padding-bottom: 1px;
`;
const PaletteButton = styled.button<{ $on?: boolean }>`
  display: flex;
  width: 29px;
  height: 24px;
  padding-right: 4px;
  border: 1px solid ${p => (p.$on ? ACTIVE_EDGE : "transparent")};
  background: ${p => (p.$on ? ACTIVE : "transparent")};
`;

/* ---------- bottom bars ---------- */

const ViewBar = styled.div`
  flex: none;
  height: 20px;
  display: flex;
  align-items: center;
  background: ${PANEL};
`;
const ViewCell = styled.button`
  flex: 1 1 0;
  min-width: 0;
  height: 20px;
  padding: 0 5px 0 7px;
  border-left: 1px solid #9a9a9a;
  gap: 5px;
`;
const CellText = styled.span`
  flex: 1;
  min-width: 0;
  overflow: hidden;
  white-space: nowrap;
  font-size: 11px;
  text-align: center;
`;
const OptionBar = styled.div`
  flex: none;
  height: 37px;
  display: flex;
  align-items: center;
  background: ${PANEL};
  border-top: 1px solid #dadada;
  border-bottom: 1px solid #dadada;
  padding-left: 4px;
`;
const Slot = styled.span<{ $w?: number }>`
  flex: none;
  width: ${p => p.$w || 30}px;
  display: flex;
  justify-content: center;
`;
const Coords = styled.div`
  display: grid;
  grid-template-columns: 24px 90px;
  grid-template-rows: 15px 15px;
  column-gap: 4px;
  margin: 0 4px;
  & > label { text-align: right; font-weight: 700; font-size: 11px; line-height: 15px; }
  & > input { border: 0; background: #fff; width: 90px; height: 15px; padding-left: 1px; font-size: 11px; }
`;
const TwoLine = styled.div<{ $w: number }>`
  flex: none;
  width: ${p => p.$w}px;
  height: 32px;
  line-height: 16px;
  font-size: 11px;
  white-space: nowrap;
  color: #777;
  & > b { color: #000; }
  & > span { color: #000; display: block; }
  & > small { display: block; font-size: 11px; }
`;
const TextButton = styled.button`
  width: 68px;
  height: 21px;
  margin-right: 2px;
  border: 1px solid #bcbcbc;
  background: #cbcbcb;
  color: #838383;
  font-size: 11px;
`;
const StatusBar = styled.footer`
  flex: none;
  height: 22px;
  display: flex;
  align-items: center;
  padding: 0 23px 0 2px;
  background: ${PANEL};
`;
const StatusText = styled.p`
  margin: 0;
  flex: 1;
  font: 11px/16px "Noto Sans", sans-serif;
`;
const BrandId = styled.a`
  width: 131px;
  height: 20px;
  border: solid #d0d0d0;
  border-width: 0 1px;
  text-align: center;
  text-decoration: none;
  font: 13px/20px Lato, sans-serif;
  color: #a0a4a6;
  & > b { font-weight: 700; }
`;

const Taskbar = styled.div`
  flex: none;
  height: 40px;
  display: flex;
  align-items: stretch;
  background: #101010;
  color: #fff;
`;
const StartButton = styled.button`
  width: 48px;
`;
const SearchBox = styled.label`
  width: 344px;
  display: flex;
  align-items: center;
  gap: 10px;
  padding-left: 12px;
  border: 1px solid #bbb;
  background: #f2f2f2;
`;
const SearchInput = styled.input`
  flex: 1;
  border: 0;
  background: transparent;
  font-size: 14px;
  &::placeholder { color: #3c3c3c; opacity: 1; }
`;
const TaskButton = styled.button<{ $open?: boolean; $front?: boolean }>`
  width: 49px;
  padding-top: 2px;
  background: ${p => (p.$front ? "#333" : "transparent")};
  box-shadow: ${p => (p.$open || p.$front ? "inset 0 -2px 0 #76b9ed" : "none")};
`;
const Tray = styled.div`
  margin-left: auto;
  display: flex;
  align-items: center;
  font-size: 11px;
`;
const TrayItem = styled.button<{ $w: number }>`
  width: ${p => p.$w}px;
  height: 40px;
`;
const Clock = styled.button`
  width: 64px;
  flex-direction: column;
  font-size: 11px;
  line-height: 18px;
`;
const Badge = styled.span`
  position: absolute;
  left: 10px;
  top: 10px;
  width: 16px;
  height: 16px;
  border: 1px solid #999;
  border-radius: 50%;
  background: #333;
  font-size: 10px;
  line-height: 14px;
`;
const NoteWrap = styled.span`
  position: relative;
  width: 20px;
  height: 20px;
`;

/* ---------- stair model ---------- */

type Pt = number[];
const pts = (a: Pt[]) => a.map(p => p.join(",")).join(" ");
const LIT = "#585858";
const SHADE = "#3b3b3b";
const SIDE = "#707175";
const PALE = "#a6a9ae";

const Poly = ({ p, f, s = "#000" }: { p: Pt[]; f: string; s?: string }) => (
  <polygon points={pts(p)} fill={f} stroke={s} vectorEffect="non-scaling-stroke" />
);
const Joint = ({ p }: { p: Pt[] }) => (
  <polyline points={pts(p)} fill="none" stroke="#b65300" vectorEffect="non-scaling-stroke" />
);
const Edge = ({ p, w = 1 }: { p: Pt[]; w?: number }) => (
  <polyline points={pts(p)} fill="none" stroke="#000" strokeWidth={w} vectorEffect="non-scaling-stroke" />
);

const upperTreads: Pt[][] = [
  [[1055, 166], [1404, 367], [1285, 425], [940, 214]],
  [[960, 301], [1301, 517], [1180, 577], [842, 353]],
  [[865, 438], [1196, 665], [1073, 730], [745, 491]],
  [[767, 575], [1092, 815], [965, 882], [647, 631]],
  [[670, 711], [988, 962], [860, 1034], [548, 771]],
];
const upperRisers: Pt[][] = [
  [[951, 222], [1298, 430], [1301, 517], [960, 301]],
  [[855, 365], [1192, 580], [1196, 665], [865, 438]],
  [[757, 504], [1083, 733], [1092, 815], [767, 575]],
  [[660, 645], [977, 885], [988, 962], [670, 711]],
  [[562, 785], [870, 1035], [883, 1112], [574, 849]],
];
const upperJoints: Pt[][] = [
  [[1145, 124], [1151, 218], [1035, 270]], [[1247, 178], [1249, 278], [1132, 334]], [[1354, 238], [1355, 340], [1240, 397]],
  [[1045, 283], [1052, 360], [932, 414]], [[1145, 348], [1149, 423], [1030, 481]], [[1249, 408], [1251, 487], [1130, 549]],
  [[945, 430], [953, 499], [830, 557]], [[1042, 490], [1047, 566], [927, 628]], [[1142, 556], [1149, 633], [1025, 697]],
  [[847, 575], [856, 640], [732, 702]], [[940, 640], [946, 709], [823, 773]], [[1038, 708], [1043, 780], [917, 849]],
  [[747, 720], [756, 780], [628, 845]], [[838, 790], [846, 853], [720, 920]], [[932, 865], [940, 930], [812, 999]],
  [[646, 862], [657, 917]], [[737, 940], [745, 994]], [[828, 1018], [836, 1073]],
  [[506, 880], [808, 1150]], [[370, 950], [665, 1231]], [[223, 1022], [515, 1318]],
  [[106, 1132], [608, 880]], [[185, 1220], [693, 953]], [[270, 1309], [785, 1031]],
];
const midRisers: Pt[][] = [
  [[273, 330], [680, 30], [678, 112], [290, 404]],
  [[356, 498], [745, 190], [749, 262], [369, 568]],
  [[437, 666], [822, 346], [824, 412], [449, 735]],
  [[518, 834], [898, 501], [897, 568], [530, 899]],
];
const midTreads: { tread: Pt[]; lit: Pt[] }[] = [
  { tread: [[290, 404], [678, 112], [745, 190], [356, 498]], lit: [[290, 404], [400, 411], [418, 418], [728, 177], [745, 190], [356, 498]] },
  { tread: [[369, 568], [749, 262], [822, 346], [437, 666]], lit: [[369, 568], [480, 576], [497, 584], [803, 328], [822, 346], [437, 666]] },
  { tread: [[449, 735], [824, 412], [898, 501], [518, 834]], lit: [[449, 735], [560, 741], [577, 750], [880, 481], [898, 501], [518, 834]] },
];
const lowerTreads: Pt[][] = [
  [[1327, 775], [1403, 757], [1524, 1211], [1414, 1238], [1420, 1188]],
  [[1231, 743], [1313, 724], [1427, 1186], [1313, 1214], [1320, 1160]],
  [[1132, 709], [1219, 688], [1325, 1160], [1207, 1189], [1212, 1132]],
  [[1026, 672], [1118, 651], [1217, 1132], [1092, 1162], [1097, 1105]],
  [[913, 635], [1013, 611], [1101, 1103], [972, 1133], [974, 1071]],
];
const lowerJoints: Pt[][] = [
  [[922, 691], [1022, 667]], [[943, 827], [1046, 802]], [[965, 973], [1073, 946]],
  [[1037, 727], [1131, 706]], [[1061, 860], [1157, 838]], [[1086, 1004], [1185, 979]],
  [[1143, 763], [1229, 742]], [[1170, 893], [1259, 872]], [[1197, 1034], [1289, 1010]],
  [[1245, 797], [1325, 777]], [[1275, 924], [1357, 904]], [[1306, 1061], [1390, 1039]],
  [[1341, 827], [1417, 809]], [[1374, 953], [1449, 935]], [[1409, 1087], [1484, 1069]],
  [[803, 651], [912, 627]], [[587, 850], [930, 764]], [[600, 1002], [953, 911]],
  [[662, 780], [690, 1140]], [[786, 667], [837, 1110]],
  [[397, 242], [409, 312], [475, 402], [487, 470], [556, 566], [565, 633], [635, 730], [644, 792]],
  [[514, 152], [522, 226], [591, 313], [599, 383], [668, 470], [676, 541], [748, 635], [752, 695]],
  [[625, 70], [631, 144], [699, 228], [705, 295], [775, 381], [781, 450], [852, 538], [855, 600]],
];

const lowered = (a: Pt, n: number): Pt => [a[0], a[1] + n];

function StairModel() {
  return (
    <Model viewBox="700 100 705 860" shapeRendering="crispEdges" role="img" aria-label="Treppe in Perspektive">
      <g transform="translate(700 120) scale(0.34438 0.33333)">
        <Poly f={SIDE} p={[[1395, 360], [1399, 515], [932, 1180], [893, 1202], [875, 1180], [860, 1034], [980, 950], [965, 880], [1085, 800], [1073, 730], [1190, 650], [1180, 577], [1295, 500], [1285, 425]]} />
        <Poly f={SIDE} p={[[1405, 273], [1457, 251], [1457, 325], [1407, 348]]} />
        <Poly f={PALE} p={[[1060, 76], [1101, 58], [1457, 251], [1405, 273]]} />
        <Poly f={LIT} p={[[1048, 70], [1405, 265], [1404, 372], [1055, 166]]} />
        <Edge w={2} p={[[1048, 70], [1405, 265], [1405, 372]]} />
        {upperTreads.map((t, i) => (
          <React.Fragment key={i}>
            <Poly f={LIT} p={upperRisers[i]} />
            <Edge w={2} p={[upperRisers[i][1], upperRisers[i][2]]} />
            <Poly f={SHADE} p={[t[3], t[2], t[1], lowered(t[1], 8), lowered(t[2], 8), [t[3][0] + 4, t[3][1] + 8]]} />
            <Poly f={LIT} p={t} />
          </React.Fragment>
        ))}
      </g>
      <g transform="translate(700 480) scale(0.44643 0.33333)">
        <Poly f={PALE} p={[[58, 20], [273, 330], [290, 404], [356, 498], [369, 568], [437, 668], [449, 735], [518, 838], [530, 899], [697, 1148], [710, 1218], [528, 943], [228, 325], [220, 305], [83, 112]]} />
        {midRisers.map((r, i) => (
          <React.Fragment key={i}>
            <Poly f={SHADE} p={r} />
            <Edge p={[lowered(r[0], 8), lowered(r[1], 8)]} />
          </React.Fragment>
        ))}
        {midTreads.map((m, i) => (
          <React.Fragment key={i}>
            <Poly f={SHADE} p={m.tread} />
            <Poly f={LIT} s="none" p={m.lit} />
            <Poly f="none" p={m.tread} />
          </React.Fragment>
        ))}
        <Poly f={SIDE} p={[[697, 1148], [978, 1075], [972, 1137], [1100, 1108], [1092, 1168], [1214, 1137], [1207, 1195], [1320, 1163], [1313, 1220], [1424, 1190], [1414, 1244], [1516, 1218], [1506, 1268], [1517, 1268], [1515, 1299], [1458, 1317], [1452, 1325], [823, 1189], [710, 1218]]} />
        {lowerTreads.map((t, i) => (
          <React.Fragment key={i}>
            <Poly f={SHADE} p={[t[3], t[2], lowered(t[2], 7), lowered(t[3], 7)]} />
            <Poly f={SHADE} p={t} />
            <Edge w={2} p={[[t[3][0], t[4][1] + 4], lowered(t[3], 6)]} />
          </React.Fragment>
        ))}
        <Edge w={2} p={[[1514, 1218], [1510, 1268], [1517, 1268]]} />
        <Poly f={LIT} p={[[530, 899], [903, 565], [978, 1071], [695, 1146]]} />
        <Poly f={SHADE} s="none" p={[[530, 899], [903, 565], [918, 672], [665, 912], [645, 912], [640, 906]]} />
        <Poly f="none" p={[[530, 899], [903, 565], [978, 1071], [695, 1146]]} />
        <Edge p={[[697, 1154], [978, 1078]]} />
        <Edge w={2} p={[[58, 20], [273, 330], [290, 404], [356, 498], [369, 568], [437, 668], [449, 735], [518, 838], [530, 899], [695, 1148]]} />
      </g>
      <g transform="translate(700 120) scale(0.34438 0.33333)">
        <Poly f={SHADE} p={[[75, 1098], [355, 1408], [883, 1112], [883, 1120], [355, 1416], [75, 1106]]} />
        <Poly f={LIT} p={[[574, 849], [883, 1112], [355, 1408], [75, 1098]]} />
        <Edge w={2} p={[[870, 1128], [880, 1190]]} />
        {upperJoints.map((j, i) => <Joint key={i} p={j} />)}
        <rect x="1122" y="858" width="16" height="16" fill="#1f7fe0" />
        <path d="M1095 945L1130 898" stroke="#1f7fe0" strokeWidth="6" />
        <path d="M1097 912L1112 923" stroke="#fff" strokeWidth="8" />
        <path d="M1098 910L1123 932" stroke="#d33" strokeWidth="3" />
        <path d="M1509 1172L1525 1190M1525 1172L1509 1190" stroke="#444" strokeWidth="6" />
      </g>
      <g transform="translate(700 480) scale(0.44643 0.33333)">
        {lowerJoints.map((j, i) => <Joint key={i} p={j} />)}
      </g>
    </Model>
  );
}

/* ---------- data ---------- */

const menus = ["Ablage", "Bearbeiten", "Ansicht", "Planung", "Dokumentation", "Optionen", "Fenster", "Hilfe"];

/* suffix: ! active, ~ disabled, > followed by a drop-down arrow, | divider */
const toolbar = (
  "save~ | undo redo~ | find dropper syringe transferAll~ stretch guide!> snapPoint!> tracker!> grid> scissors axe~ adjust~ corner~ arcCorner~ resizeBox~ beamCut roofHome~ dimBox~ dimFlat~ star " +
  "ghostOn! cloudSet houseBlue! bookInfo dropBrush~ tags cubeEdit> compass> origin box3d cube camera cameraSet pen lineTypes hatch brush dropBrush~ brick composite profile zone surfaces " +
  "wallHatch! trapezoid! layersTwo bandHatch! hatch! circleBox! zoneBox! dimBlue! dimFrame hatchFrame abcFrame imgFrame! tangent roofBlue section magnetBlocks treeHouse"
).split(" ");

const planTools = "wall door window slab column beam roof shell skylight curtain stair railing chair morph mesh corner2 zoneTool".split(" ");
const docTools = ["dim", "levelDim~", "angleDim~", "label", "", "text", "fill", "line", "circle"];
const palette = "cursor! wallCur moveP~ rotP~ mirrorP~ elevP~ moveC~ rotC~ mirrorC~ moveCC~ rotCC~ copies~ layersSet! layersDlg layers walk~ lockSnap~".split(" ");

const viewCells: [string, string][] = [
  ["zoomFit", "571%"], ["orient", "0,00°"], ["ruler", "1:100"], ["layers", "04 Beispiel Gr Geneh..."], ["hatchBox", "Komplettes Modell"],
  ["pen", "02 S/W 1:100/200"], ["frameBox", "04 Beispiel Genehmig..."], ["override", "Keine Überschreibun..."], ["houseOut", "00 Reiner Neubau"], ["dimStd", "DIN 1356 - Rundung ...."],
];

const base = (k: string) => k.replace(/[!~>]/g, "");

function MainToolbar() {
  return (
    <TopBar role="toolbar" aria-label="Standard">
      <Divider $h={14} $m={0} />
      {toolbar.map((k, i) => {
        if (k === "|") return <Divider key={i} />;
        const on = k.includes("!");
        const drop = k.includes(">");
        return (
          <React.Fragment key={i}>
            <ToolButton $on={on} $w={drop ? 30 : 25} disabled={k.includes("~")} aria-label={base(k)}>
              <Icon name={base(k)} size={18} dim={k.includes("~")} />
            </ToolButton>
            {drop && (
              <ToolButton $on={on} $w={16} aria-label={base(k) + " Menü"}>
                <Tri $dir="down" />
              </ToolButton>
            )}
          </React.Fragment>
        );
      })}
    </TopBar>
  );
}

function Head({ open, children }: { open?: boolean; children: string }) {
  return (
    <PanelHead aria-expanded={!!open}>
      <HeadMark><Tri $dir={open ? "down" : "right"} /></HeadMark>
      {children}
    </PanelHead>
  );
}

function OpacitySlider({ label }: { label: string }) {
  return (
    <SliderBox>
      <Slider type="range" min="0" max="100" defaultValue="100" disabled aria-label={label} />
      <Ticks>{Array.from({ length: 11 }, (_, i) => <i key={i} />)}</Ticks>
    </SliderBox>
  );
}

function SidebarPanel() {
  return (
    <Sidebar>
      <Block $h={43} $first>
        <Grip />
        <Row $pad="1px 0">
          <BoxButton $w={36} $h={27} $tone="on" aria-label="Pfeil"><Icon name="cursor" size={18} /></BoxButton>
          <Slot $w={37}><Icon name="marquee" size={18} /></Slot>
        </Row>
      </Block>
      <Head open>Planung</Head>
      <ToolGrid $bottom={4}>
        {planTools.map(t => <Cell key={t} aria-label={t}><Icon name={t} size={20} /></Cell>)}
      </ToolGrid>
      <Head>Sichten</Head>
      <Head open>Dokumentation</Head>
      <DocArea>
        <ToolGrid $bottom={5}>
          {docTools.map((t, i) => (t ? <Cell key={t} aria-label={base(t)}><Icon name={base(t)} size={19} dim={t.includes("~")} /></Cell> : <span key={i} />))}
        </ToolGrid>
        <ScrollRail>
          <svg width="8" height="6"><path d="M1 5l3-4 3 4" stroke="#444" strokeWidth="2" fill="none" /></svg>
          <ScrollThumb />
          <svg width="8" height="6"><path d="M1 1l3 4 3-4" stroke="#444" strokeWidth="2" fill="none" /></svg>
        </ScrollRail>
      </DocArea>
      <Head>Sonstiges</Head>

      <Block $h={146}>
        <Grip />
        <Caption $small $h={12}>Haupt:</Caption>
        <Row $gap={2} $align="flex-end" $pad="10px 3px">
          <BoxButton $w={40} $h={18} aria-label="Schnellauswahl"><Icon name="quickSelect" size={15} /><Tri $dir="right" /></BoxButton>
          <BoxButton $w={40} $h={18} aria-label="Auswahlmethode"><Icon name="marqueeCur" size={15} /><Tri $dir="right" /></BoxButton>
          <BoxButton $w={40} $h={18} $tone="blue" aria-label="Magnet"><Icon name="magnet" size={15} /></BoxButton>
          <BoxButton $w={41} $h={28} aria-label="Auswahl"><Icon name="cursor" size={14} /></BoxButton>
        </Row>
      </Block>

      <Block $h={232}>
        <Grip />
        <Row $gap={2} $pad="2px 0 0 3px">
          <BoxButton $w={28} $h={28} aria-label="Transparentpause"><Icon name="ghostWin" size={18} /></BoxButton>
          <GreyField />
        </Row>
        <Row $h={38} $gap={12} $pad="0 8px 3px">
          <Slot $w={18}><Icon name="compare" dim /></Slot>
          <Slot $w={18} />
          {["moveG", "rotG", "backG", "swapG"].map(n => <Slot key={n} $w={18}><Icon name={n} size={17} dim /></Slot>)}
        </Row>
        <Rule />
        <Caption $h={27} $dim>Transparentpause:</Caption>
        <Row $h={28}>
          <BoxButton $w={28} $h={28} $tone="grey" aria-label="Farbe"><Swatch /><Tri $dir="right" $dim /></BoxButton>
          <OpacitySlider label="Transparentpause" />
          <BoxButton $w={15} $h={28} $tone="grey" aria-label="Optionen" />
        </Row>
        <Caption $h={25} $dim>Aktiv:</Caption>
        <Row $h={28}>
          <BoxButton $w={28} $h={28} $tone="grey" aria-label="Aktive Farbe"><Wheel /><Tri $dir="right" $dim /></BoxButton>
          <OpacitySlider label="Aktiv" />
        </Row>
        <Row $h={6} />
        <Rule />
        <Row $h={38} $gap={12} $pad="4px 8px 0 38px">
          {["handG", "overlapG", "splitG", "hatchEye"].map(n => <Slot key={n} $w={18}><Icon name={n} size={17} dim /></Slot>)}
        </Row>
      </Block>

      <Block $h={208}>
        <Grip />
        <Caption $h={20}>Standard-Elemente</Caption>
        <Row $h={30} $pad="1px 2px 0">
          <BoxButton $w={30} $h={29} $tone="on" aria-label="Neubau"><Icon name="bricks" /></BoxButton>
          <Slot><Icon name="dozer" /></Slot>
          <Slot><Icon name="crane" /></Slot>
          <Slot $w={61} />
          <BoxButton $w={28} $h={28} aria-label="Umbau"><Icon name="stack" /></BoxButton>
        </Row>
        <Row $h={6} />
        <Rule />
        <Caption as="label" htmlFor="filter" $h={27}>Umbau-Filter:</Caption>
        <SelectBox>
          <FilterSelect id="filter" defaultValue="n"><option value="n">00 Reiner Neubau</option></FilterSelect>
          <Chevron viewBox="0 0 8 6"><path d="M0 1l4 4 4-4" stroke="#444" fill="none" /></Chevron>
        </SelectBox>
      </Block>
    </Sidebar>
  );
}

function LayerPalette() {
  return (
    <LayerBar role="toolbar" aria-label="Ebenen">
      <LayerClose><RedX aria-label="Schließen">x</RedX><ShortLine $h={14} $ml={5} /></LayerClose>
      <Slot $w={33}><Icon name="eyeSwap" size={18} /></Slot>
      <Slot $w={30}><Icon name="lockSwap" size={19} /></Slot>
      <Divider $m={0} $h={30} />
      <LayerGroup $w={94}>
        Ausgewählte Ebe
        <LayerIcons>{["eye", "lock", "unlock"].map(n => <MiniButton key={n} aria-label={n} disabled><Icon name={n} size={12} dim /></MiniButton>)}</LayerIcons>
      </LayerGroup>
      <Divider $m={0} $h={30} />
      <LayerGroup $w={94}>
        Alle Ebenen:
        <LayerIcons><MiniButton aria-label="Alle zeigen"><Icon name="eye" size={13} /></MiniButton><MiniButton aria-label="Alle sperren"><Icon name="lock" size={12} /></MiniButton></LayerIcons>
      </LayerGroup>
      <Divider $m={0} $h={30} />
      <LayerUndo>
        <MiniButton aria-label="Wiederholen"><Icon name="redo" size={11} /></MiniButton>
        <MiniButton aria-label="Widerrufen"><Icon name="undo" size={11} dim /></MiniButton>
      </LayerUndo>
    </LayerBar>
  );
}

function Options() {
  const ico = (n: string, dim?: boolean) => <Slot key={n}><Icon name={n} size={17} dim={dim} /></Slot>;
  return (
    <OptionBar role="toolbar" aria-label="Koordinaten">
      <Divider $h={14} $m={0} />
      <Slot $w={4} />
      <Slot><BoxButton $w={28} $h={28} aria-label="Raster"><Icon name="stretch" size={10} /></BoxButton></Slot>
      <Slot><BoxButton $w={28} $h={28} aria-label="Schräges Raster"><Icon name="gridSkew" size={20} /></BoxButton></Slot>
      <BoxButton $w={30} $h={29} $tone="on" aria-label="Achsen"><Icon name="gridAxes" size={20} /></BoxButton>
      <Slot><Icon name="gridRot" size={20} /></Slot>
      <BoxButton $w={30} $h={29} $tone="on" aria-label="Fangpunkt"><Icon name="cross" size={17} /></BoxButton>
      {ico("dotsCross")}
      <Slot><Icon name="dotsFrame" size={20} /></Slot>
      <Divider $m={5} />
      <BoxButton $w={14} $h={28} $tone="blue" aria-label="Delta xy"><Icon name="delta" size={12} /></BoxButton>
      <Coords>
        <label htmlFor="cx">∖x :</label><input id="cx" defaultValue="-1,491" />
        <label htmlFor="cy">∖y :</label><input id="cy" defaultValue="1,049" />
      </Coords>
      <Divider $m={0} />
      <Slot $w={6} />
      <BoxButton $w={14} $h={28} $tone="blue" aria-label="Delta rw"><Icon name="delta" size={12} /></BoxButton>
      <Coords>
        <label htmlFor="cr">∖r :</label><input id="cr" defaultValue="1,823" />
        <label htmlFor="cw">w:</label><input id="cw" defaultValue="144,89°" />
      </Coords>
      <Divider $m={0} />
      <Slot $w={6} />
      <BoxButton $w={28} $h={28} $tone="grey" disabled aria-label="Sperre"><Icon name="lockOff" /></BoxButton>
      {["planeA", "planeB", "planeC", "planeD"].map(n => ico(n, true))}
      <Slot $w={11} />
      <TwoLine $w={96}><b>∖z :</b> 0,000<small>zu Projekturspr...</small></TwoLine>
      <Row $h={32} $align="flex-end" $pad="0 0 2px"><BoxButton $w={14} $h={14} $tone="grey" aria-label="Ursprung"><Tri $dir="right" $dim /></BoxButton></Row>
      <Slot $w={24} />
      <Divider $h={14} $m={0} />
      <Slot $w={5} />
      <BoxButton $w={28} $h={28} $tone="blue" aria-label="Hilfslinien"><Icon name="guide" /></BoxButton>
      {ico("guideSeg")}{ico("guideX", true)}{ico("eraser", true)}
      <Divider $m={5} />
      {["perp", "parallel", "bisect", "offset1", "offset2", "special"].map(n => ico(n))}
      {ico("planeT", true)}
      <Slot><BoxButton $w={28} $h={28} $tone="grey" disabled aria-label="Segment"><Icon name="seg1" size={17} dim /></BoxButton></Slot>
      {ico("arc1", true)}{ico("arc2", true)}{ico("groupA")}
      <BoxButton $w={30} $h={29} $tone="on" aria-label="Gruppe"><Icon name="groupB" size={17} /></BoxButton>
      <Slot><BoxButton $w={28} $h={28} aria-label="Zauberstab"><Icon name="wand" /></BoxButton></Slot>
      <Divider $m={5} />
      <Slot><BoxButton $w={28} $h={28} $tone="blue" aria-label="Fanghilfe"><Icon name="snapGuide" size={17} /></BoxButton></Slot>
      <Slot><BoxButton $w={28} $h={28} $tone="blue" aria-label="Fangpunkte"><Icon name="snapCheck" size={17} /></BoxButton></Slot>
      <BoxButton $w={12} $h={28} aria-label="Mehr"><Tri $dir="right" /></BoxButton>
      <Slot $w={5} />
      <TwoLine $w={75}><span>Hälfte</span><small>2</small></TwoLine>
      <Row $h={32} $align="flex-start" $pad="2px 0 0"><BoxButton $w={13} $h={13} aria-label="Teilung"><Tri $dir="right" /></BoxButton></Row>
      <Divider $m={6} />
      <TextButton disabled>OK</TextButton>
      <TextButton disabled>Abbrechen</TextButton>
    </OptionBar>
  );
}

function Tasks() {
  return (
    <Taskbar>
      <StartButton aria-label="Start">
        <svg width="16" height="16" viewBox="0 0 16 16"><path d="M0 2l7-1v6.500H0zM8 1l8-1v7.500H8zM0 8.500h7V15l-7-1zM8 8.500h8V16l-8-1z" fill="#fff" /></svg>
      </StartButton>
      <SearchBox>
        <svg width="17" height="17" viewBox="0 0 17 17"><path d="M5 6.500a5 5 0 1 1 10 0a5 5 0 1 1-10 0M7 10l-6 6" stroke="#222" strokeWidth="1.3" fill="none" /></svg>
        <SearchInput placeholder="Zur Suche Text hier eingeben" aria-label="Suche" />
      </SearchBox>
      <TaskButton aria-label="Cortana"><svg width="16" height="16"><circle cx="8" cy="8" r="6.500" stroke="#fff" strokeWidth="2" fill="none" /></svg></TaskButton>
      <TaskButton aria-label="Taskansicht"><svg width="17" height="16"><path d="M1 0v3h10V0M1 16v-3h10v3M1 5h10v6H1zM14.500 0v16" stroke="#fff" fill="none" /><path d="M13 5h3v3h-3z" fill="#fff" /></svg></TaskButton>
      <TaskButton aria-label="Edge">
        <svg width="25" height="25" viewBox="0 0 24 24">
          <defs><linearGradient id="eg" x1="0" x2="1"><stop offset="0" stopColor="#26a5e0" /><stop offset="1" stopColor="#5fd45a" /></linearGradient></defs>
          <circle cx="12" cy="12" r="11.500" fill="#1173c7" />
          <path d="M.500 11C2 4 7 .500 12 .500c7 0 11.500 5 11.500 10 0 4-3 6-6 6-2 0-4-1-3-3 1-3-1-5-4-5-4 0-8 1-10 2.500z" fill="url(#eg)" />
          <path d="M8 15c0-4 2-6 4-6 3 0 3 3 2 5-1 4 5 5 8 2-2 5-6 7-9 7-3-1-5-4-5-8z" fill="#0b4f9c" />
          <path d="M14 13c-1 4 5 5 8 2l-.500 2c-4 3-10 1-9.500-3z" fill="#101010" />
        </svg>
      </TaskButton>
      <TaskButton $open aria-label="Explorer">
        <svg width="22" height="20" viewBox="0 0 22 20"><path d="M0 1h8l2 2h12v15H0z" fill="#e8a317" /><path d="M0 5h22v14H0z" fill="#fcd462" /><path d="M4 19v-7h14v7h-4v-4H8v4z" fill="#3f97e0" /></svg>
      </TaskButton>
      <TaskButton $open aria-label="Rechner">
        <svg width="18" height="24" viewBox="0 0 18 24"><path d="M0 0h18v24H0z" fill="#fff" /><path d="M2 2h14v5H2z" fill="#111" /><path d="M3 10.500h12M3 14h12M3 17.500h12M3 21h12" stroke="#111" strokeWidth="2" strokeDasharray="2 3" /></svg>
      </TaskButton>
      <TaskButton aria-label="Chrome">
        <svg width="22" height="22" viewBox="0 0 22 22"><circle cx="11" cy="11" r="11" fill="#f8c523" /><path d="M1.500 5.500A11 11 0 0 1 20.500 5.500H11L6 13z" fill="#e2443a" /><path d="M1.500 5.500L7 14l5 1-2 7A11 11 0 0 1 1.500 5.500z" fill="#2fa455" /><circle cx="11" cy="11" r="5.200" fill="#fff" /><circle cx="11" cy="11" r="4" fill="#4384f3" /></svg>
      </TaskButton>
      <TaskButton aria-label="BIMx">
        <svg width="24" height="24" viewBox="0 0 24 24"><path d="M0 0h24v24H0z" fill="#0a78d8" /><path d="M12 4l10 5-10 5L2 9z" fill="#fff" /><path d="M2 11l10 5 10-5v4l-10 5-10-5z" fill="#fff" /><path d="M7 9l5-2 5 2-5 2z" fill="#0a78d8" /></svg>
      </TaskButton>
      <TaskButton $front aria-label="ARCHICAD"><Logo size={22} /></TaskButton>
      <TaskButton $open aria-label="Remote">
        <svg width="24" height="24" viewBox="0 0 24 24"><path d="M5 1h19v14H5z" fill="#3bb0f5" stroke="#2a6ea0" /><circle cx="6" cy="12" r="4.500" fill="#9db8c8" stroke="#667" /><path d="M9 16l5 6" stroke="#8a99a5" strokeWidth="2.500" /></svg>
      </TaskButton>
      <Tray>
        <TrayItem $w={24} aria-label="Mehr"><svg width="12" height="8"><path d="M1 7l5-5 5 5" stroke="#fff" strokeWidth="1.3" fill="none" /></svg></TrayItem>
        <TrayItem $w={24} aria-label="Akku"><svg width="17" height="12"><path d="M1 1v3h4V1M3 4v6h2M6 3h9v7H6zM16 5v3" stroke="#fff" fill="none" /><path d="M8 5h6v4H8z" fill="#fff" /></svg></TrayItem>
        <TrayItem $w={24} aria-label="Netzwerk"><svg width="17" height="17"><path d="M1 8a7 7 0 1 1 14 0M1 8a7 7 0 0 0 7 7M1 6h14M1 10h8M8 1c-4 4-4 10 0 14M8 1c3 3 3 5 3 8" stroke="#fff" fill="none" /><circle cx="13" cy="13" r="3" stroke="#fff" fill="none" /><path d="M11 11l4 4" stroke="#fff" /></svg></TrayItem>
        <TrayItem $w={24} aria-label="Lautstärke"><svg width="16" height="14"><path d="M1 5h2l4-4v12L3 9H1zM10 5l5 5M15 5l-5 5" stroke="#fff" fill="none" /></svg></TrayItem>
        <TrayItem $w={36}>DEU</TrayItem>
        <Clock><span>12:39</span><span>01.09.2021</span></Clock>
        <TrayItem $w={50} aria-label="Mitteilungen">
          <NoteWrap>
            <svg width="20" height="20"><path d="M1 2h15v12H9l-3 3v-3H1z" fill="#fff" /><path d="M4 5h9M4 8h9M4 11h6" stroke="#111" /></svg>
            <Badge>1</Badge>
          </NoteWrap>
        </TrayItem>
        <Divider $h={40} $m={2} />
      </Tray>
    </Taskbar>
  );
}

function Logo({ size }: { size: number }) {
  return (
    <svg width={size} height={size} viewBox="0 0 16 16" aria-hidden="true">
      <defs><linearGradient id="lg" x1="0" y1="0" x2="1" y2="1"><stop offset="0" stopColor="#6fa3ee" /><stop offset="1" stopColor="#1d3fa0" /></linearGradient></defs>
      <path d="M4 0h10l2 2v12l-2 2H1L0 14V6C0 3 2 0 4 0z" fill="url(#lg)" />
      <path d="M1 15C3 4 7 1 10 3c2 1 3 4 3 6M13 11v2" stroke="#fff" strokeWidth="1.6" fill="none" />
    </svg>
  );
}

export default function App() {
  return (
    <Shell>
      <Global />
      <TitleBar>
        <Logo size={14} />
        <Title>Ohne Titel - ARCHICAD 25 DEMO</Title>
        <WinButton aria-label="Minimieren"><svg width="10" height="10"><path d="M0 5.500h10" stroke="#000" /></svg></WinButton>
        <WinButton aria-label="Wiederherstellen"><svg width="10" height="10"><path d="M.500 2.500h7v7h-7zM2.500 2V.500h7v7H8" stroke="#000" fill="none" /></svg></WinButton>
        <WinButton aria-label="Schließen"><svg width="10" height="10"><path d="M0 0l10 10M10 0L0 10" stroke="#000" /></svg></WinButton>
      </TitleBar>
      <MenuBar>
        {menus.map(m => <MenuItem key={m}>{m}</MenuItem>)}
        <MdiButtons>
          <button aria-label="Fenster minimieren"><svg width="9" height="8"><path d="M1 7h7" stroke="#333" strokeWidth="2" /></svg></button>
          <button aria-label="Fenster wiederherstellen"><svg width="9" height="8"><path d="M1 3h5v4H1zM3 1h5v4" stroke="#333" strokeWidth="1.500" fill="none" /></svg></button>
          <button aria-label="Fenster schließen"><svg width="9" height="8"><path d="M2 1l5 6M7 1L2 7" stroke="#333" strokeWidth="2" /></svg></button>
        </MdiButtons>
      </MenuBar>
      <MainToolbar />
      <Workspace>
        <SidebarPanel />
        <Main>
          <Tabs role="tablist">
            <TabGrid aria-label="Übersicht"><Icon name="four" size={18} /></TabGrid>
            <Tab role="tab"><Icon name="plan" size={18} />[1. OG]</Tab>
            <Tab role="tab"><Icon name="tower" size={18} />[Aktions-Center]</Tab>
            <Tab role="tab"><Icon name="box3dWhite" size={18} />[3D / Alle]</Tab>
            <Tab role="tab" $on aria-selected="true"><Icon name="perspective" size={18} />[1 Perspektive]<b>x</b></Tab>
            <TabEnd aria-label="Navigator"><Icon name="treeHouseBlue" size={22} /><Tri $dir="down" /></TabEnd>
          </Tabs>
          <Viewport>
            <StairModel />
            <Notice>ARCHICAD Demo-Version. Die Funktionen Sichern, Kopieren und Teamwork sind nicht verfügbar.</Notice>
            <EdgeHandle $side="top"><Dashes /></EdgeHandle>
            <EdgeHandle $side="bottom"><Dashes /></EdgeHandle>
            <EdgeHandle $side="right"><Dashes $v /></EdgeHandle>
            <LayerPalette />
            <Brand>GRAPHISOFT.</Brand>
          </Viewport>
          <ViewBar>
            <Slot $w={23}><Icon name="zoomPrev" size={17} /></Slot>
            <Slot $w={22}><Icon name="zoomNext" size={17} dim /></Slot>
            <Slot $w={26}><Icon name="zoomIn" size={17} /></Slot>
            {viewCells.map(([n, t]) => (
              <ViewCell key={n}><Icon name={n} size={15} /><CellText>{t}</CellText><Tri $dir="right" /></ViewCell>
            ))}
          </ViewBar>
        </Main>
        <Palette role="toolbar" aria-label="Bearbeiten">
          <PaletteTop />
          <PaletteBody>
            <PaletteSide><RedX aria-label="Palette schließen">x</RedX><ShortLine $h={71} $ml={5} /></PaletteSide>
            <PaletteList>
              {palette.map((k, i) => (
                <PaletteButton key={i} $on={k.includes("!")} disabled={k.includes("~")} aria-label={base(k)}>
                  <Icon name={base(k)} size={17} dim={k.includes("~")} />
                </PaletteButton>
              ))}
            </PaletteList>
          </PaletteBody>
        </Palette>
      </Workspace>
      <Options />
      <StatusBar>
        <StatusText>Klicken Sie mit dem Cursor auf ein Element oder ziehen Sie einen Auswahlbereich auf. Drücken Sie für Morphbearbeitung Strg/Ctrl+Umsch, um zwischen Element-/Unterelement-Auswahl zu wechseln.</StatusText>
        <Slot $w={24}><Icon name="windows" size={16} /></Slot>
        <BrandId href="#"><b>GRAPHISOFT</b> ID</BrandId>
      </StatusBar>
      <Tasks />
    </Shell>
  );
}
